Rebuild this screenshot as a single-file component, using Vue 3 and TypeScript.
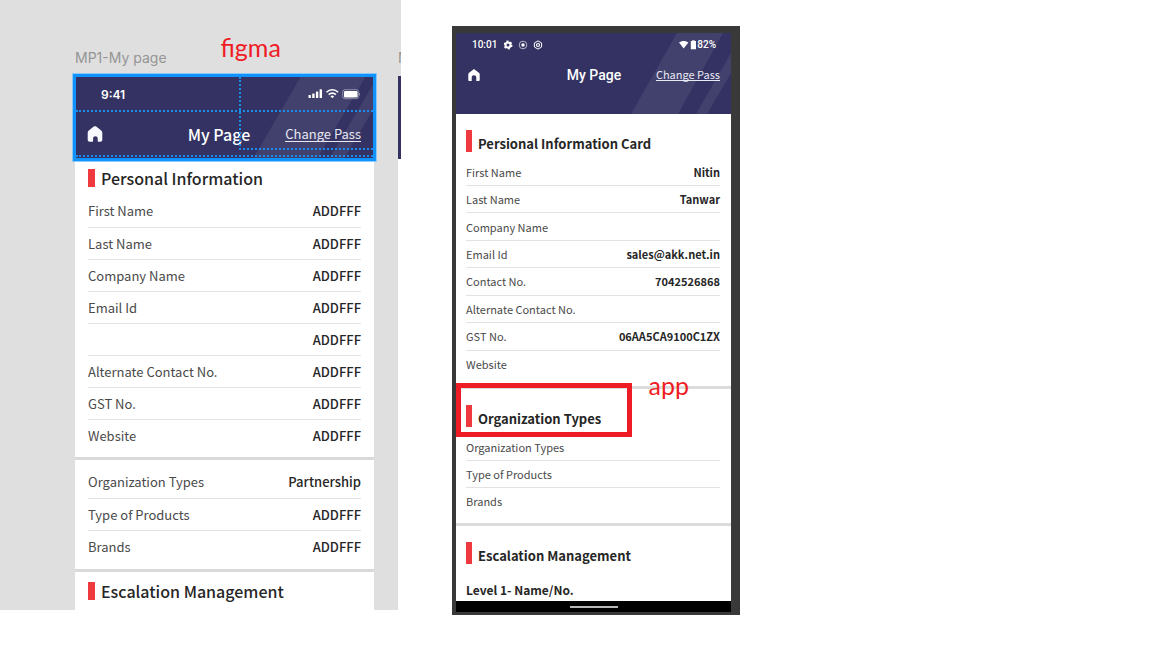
<script setup lang="ts">
interface Row {
  label: string
  value: string
}

const designPersonal: Row[] = [
  { label: 'First Name', value: 'ADDFFF' },
  { label: 'Last Name', value: 'ADDFFF' },
  { label: 'Company Name', value: 'ADDFFF' },
  { label: 'Email Id', value: 'ADDFFF' },
  { label: '', value: 'ADDFFF' },
  { label: 'Alternate Contact No.', value: 'ADDFFF' },
  { label: 'GST No.', value: 'ADDFFF' },
  { label: 'Website', value: 'ADDFFF' },
]

const designOrganization: Row[] = [
  { label: 'Organization Types', value: 'Partnership' },
  { label: 'Type of Products', value: 'ADDFFF' },
  { label: 'Brands', value: 'ADDFFF' },
]

const appPersonal: Row[] = [
  { label: 'First Name', value: 'Nitin' },
  { label: 'Last Name', value: 'Tanwar' },
  { label: 'Company Name', value: '' },
  { label: 'Email Id', value: 'sales@akk.net.in' },
  { label: 'Contact No.', value: '7042526868' },
  { label: 'Alternate Contact No.', value: '' },
  { label: 'GST No.', value: '06AA5CA9100C1ZX' },
  { label: 'Website', value: '' },
]

const appOrganization: Row[] = [
  { label: 'Organization Types', value: '' },
  { label: 'Type of Products', value: '' },
  { label: 'Brands', value: '' },
]
</script>

<template>
  <main class="board">
    <section class="canvas">
      <p class="frame-name">MP1-My page</p>
      <p class="frame-name next-name">M</p>
      <p class="note note-figma">figma</p>

      <article class="frame">
        <header class="head">
          <svg class="stripes" viewBox="0 0 299 83" preserveAspectRatio="none" aria-hidden="true">
            <polygon points="226,0 291,0 242,83 178,83" />
            <polygon points="299,7 299,32 269,83 254,83" />
          </svg>
          <div class="status">
            <span class="clock">9:41</span>
            <svg class="signals" width="52" height="12" viewBox="0 0 52 12" fill="#fff" aria-hidden="true">
              <rect x="0.5" y="7" width="2.4" height="3" rx="0.6" />
              <rect x="4.2" y="5.5" width="2.4" height="4.5" rx="0.6" />
              <rect x="7.9" y="3.5" width="2.4" height="6.5" rx="0.6" />
              <rect x="11.6" y="1.2" width="2.4" height="8.8" rx="0.6" />
              <g fill="none" stroke="#fff" stroke-width="1.6">
                <path d="M18.5 4.2c3.2-3.2 8.4-3.2 11.6 0" />
                <path d="M20.7 6.6c2-2 5.2-2 7.2 0" />
              </g>
              <path d="M22.4 8.3c1.1-1 2.7-1 3.8 0l-1.9 2z" />
              <rect x="34.7" y="1.7" width="16" height="9" rx="2.2" fill="none" stroke="#fff" stroke-opacity="0.4" />
              <rect x="36" y="3" width="13.6" height="6.4" rx="1.2" />
              <rect x="51.2" y="4.700" width="0.800" height="3" rx="0.4" opacity="0.5" />
            </svg>
          </div>
          <nav class="bar">
            <button class="home" type="button" aria-label="Home">
              <svg width="16" height="16" viewBox="0 0 16 16" fill="#f8f9ff" aria-hidden="true">
                <path d="M8 .2c.5 0 .8.1 1.2.4l5 4c.7.6 1.1 1.2 1.1 2.1v7.1c0 1.2-.8 2-2 2h-1.600c-.6 0-1-.4-1-1V12.500c0-1.400-.9-2.200-2.300-2.200s-2.300.8-2.300 2.200v2.300c0 .6-.4 1-1 1H2.700c-1.200 0-2-.8-2-2V6.700c0-.9.4-1.500 1.100-2.100l5-4C7.200.3 7.500.2 8 .2z" />
              </svg>
            </button>
            <h1 class="title">My Page</h1>
            <a class="change" href="#change-pass">Change Pass</a>
          </nav>
          <div class="selection" aria-hidden="true">
            <i class="guide guide-status"></i>
            <i class="guide guide-image"></i>
            <i class="guide guide-bottom"></i>
          </div>
        </header>

        <section class="group">
          <h2 class="heading">Personal Information</h2>
          <dl class="rows">
            <div v-for="(row, i) in designPersonal" :key="i" class="row">
              <dt>{{ row.label }}</dt>
              <dd>{{ row.value }}</dd>
            </div>
          </dl>
        </section>
        <section class="group group-plain">
          <dl class="rows">
            <div v-for="row in designOrganization" :key="row.label" class="row">
              <dt>{{ row.label }}</dt>
              <dd>{{ row.value }}</dd>
            </div>
          </dl>
        </section>
        <section class="group group-last">
          <h2 class="heading">Escalation Management</h2>
        </section>
      </article>

      <div class="next-frame"></div>
    </section>

    <section class="phone">
      <article class="screen">
        <header class="head">
          <svg class="stripes" viewBox="0 0 275 81" preserveAspectRatio="none" aria-hidden="true">
            <polygon points="221,0 267,0 222,81 175,81" />
            <polygon points="275,20 275,40 251,81 240,81" />
          </svg>
          <div class="status">
            <span class="clock">10:01</span>
            <svg class="apps" width="40" height="10" viewBox="0 0 40 10" fill="none" stroke="#fff" aria-hidden="true">
              <circle cx="4" cy="5" r="2.5" stroke-width="2" />
              <circle cx="4" cy="5" r="3.8" stroke-width="1.4" stroke-dasharray="2 1.98" />
              <circle cx="19" cy="5" r="3.8" stroke-width="0.8" stroke-opacity="0.8" />
              <circle cx="19" cy="5" r="1.7" fill="#fff" stroke="none" />
              <path d="M34 .9l3.6 2.05v4.1L34 9.1l-3.6-2.05v-4.1z" stroke-width="1" />
              <circle cx="34" cy="5" r="1.5" stroke-width="1.2" />
            </svg>
            <svg class="power" width="18" height="10" viewBox="0 0 18 10" fill="#fff" aria-hidden="true">
              <path d="M0 2.6C2.7.4 6.7.4 9.4 2.6L4.7 8.6z" />
              <path d="M13.2 1V.3h2.4V1h1.4v8.2h-5.2V1z" />
            </svg>
            <span class="level">82%</span>
          </div>
          <nav class="bar">
            <button class="home" type="button" aria-label="Home">
              <svg width="12" height="12" viewBox="0 0 12 12" fill="#fff" aria-hidden="true">
                <path d="M6 .1l4.9 3.6c.6.5.8.9.8 1.6V11c0 .6-.3.9-.9.9H8.3V8.5C8.3 7.1 7.4 6.3 6 6.3s-2.3.8-2.3 2.2v3.4H1.2c-.6 0-.9-.3-.9-.9V5.3c0-.7.2-1.1.8-1.6z" />
              </svg>
            </button>
            <h1 class="title">My Page</h1>
            <a class="change" href="#change-pass-app">Change Pass</a>
          </nav>
        </header>

        <section class="group">
          <h2 class="heading"><span>Persional Information Card</span></h2>
          <dl class="rows rows-long">
            <div v-for="row in appPersonal" :key="row.label" class="row">
              <dt>{{ row.label }}</dt>
              <dd>{{ row.value }}</dd>
            </div>
          </dl>
        </section>
        <section class="group">
          <h2 class="heading"><span>Organization Types</span></h2>
          <dl class="rows">
            <div v-for="row in appOrganization" :key="row.label" class="row">
              <dt>{{ row.label }}</dt>
              <dd>{{ row.value }}</dd>
            </div>
          </dl>
          <div class="marker" aria-hidden="true"></div>
          <p class="note note-app">app</p>
        </section>
        <section class="group group-last">
          <h2 class="heading"><span>Escalation Management</span></h2>
          <h3 class="level-title">Level 1- Name/No.</h3>
        </section>
        <footer class="gesture"><span></span></footer>
      </article>
    </section>
  </main>
</template>

<style>
body {
  background: #fff;
}
</style>

<style scoped>
* {
  box-sizing: border-box;
}

h1,
h2,
h3,
p,
dl,
dd {
  margin: 0;
}

.board {
  display: grid;
  grid-template-columns: minmax(0, 401fr) minmax(0, 51fr) minmax(0, 288fr) minmax(0, 412fr);
  align-items: start;
  font-family: 'Noto Sans CJK JP', 'Noto Sans', sans-serif;
}

/* Shared page parts */
.head {
  position: relative;
  background: #333262;
  color: #fff;
}

.stripes {
  position: absolute;
  inset: 0;
  width: 100%;
  height: 100%;
  fill: #42416d;
}

.status {
  position: relative;
  display: flex;
  align-items: center;
}

.bar {
  position: relative;
  display: grid;
  grid-template-columns: 1fr auto 1fr;
  align-items: center;
}

.home {
  display: flex;
  justify-self: start;
  padding: 0;
  border: 0;
  background: none;
}

.title {
  font-weight: 500;
}

.change {
  justify-self: end;
  color: #e8e8f2;
  text-decoration: none;
  border-bottom: 1px solid #e8e8f2;
}

.heading {
  display: flex;
  align-items: center;
  color: #262626;
}

.heading::before {
  content: '';
  background: #ee3a3f;
}

.rows {
  display: flex;
  flex-direction: column;
}

.row {
  flex: 1;
  display: flex;
  align-items: center;
  justify-content: space-between;
  color: #4a4a4a;
}

.row + .row {
  border-top: 1px solid #e2e2e2;
}

.row dd {
  color: #262626;
}

.note {
  font-family: Lato, sans-serif;
  font-size: 25px;
  line-height: 28px;
  color: #f01c24;
}

/* Design canvas */
.canvas {
  position: relative;
  display: grid;
  grid-template-columns: minmax(0, 75fr) minmax(0, 299fr) minmax(0, 24fr) minmax(0, 3fr);
  grid-template-rows: 76px auto;
  background: #dfdfdf;
  overflow: hidden;
}

.frame-name {
  grid-column: 2;
  grid-row: 1;
  align-self: end;
  padding-bottom: 8px;
  font-family: Inter, sans-serif;
  font-size: 14px;
  line-height: 20px;
  color: #959595;
}

.next-name {
  grid-column: 4;
}

.note-figma {
  position: absolute;
  top: 33px;
  left: 55%;
}

.frame {
  grid-column: 2;
  grid-row: 2;
  background: #fff;
}

.next-frame {
  grid-column: 4;
  grid-row: 2;
  background: linear-gradient(#333262 83px, #fff 83px);
}

.frame .status {
  justify-content: space-between;
  height: 36px;
  padding: 0 14px 0 26px;
}

.frame .clock {
  font-family: Inter, sans-serif;
  font-size: 12px;
  font-weight: 600;
}

.frame .bar {
  grid-template-columns: 10fr auto 11fr;
  height: 47px;
  padding: 0 13px 3px 12px;
}

.frame .title {
  font-size: 16px;
  line-height: 20px;
}

.frame .change {
  font-size: 13px;
  line-height: 15px;
}

.selection {
  position: absolute;
  inset: -2px -2px -2px;
  border: 3px solid #1093ff;
  outline: 1px solid #8cc8f8;
}

.guide {
  position: absolute;
  right: 0;
  border: 0 dotted #1a8cf0;
}

.guide-status {
  top: 33px;
  left: 0;
  border-top-width: 2px;
}

.guide-image {
  top: 0;
  left: 55%;
  height: 73px;
  border-left-width: 2px;
  border-bottom-width: 2px;
}

.guide-bottom {
  bottom: 1px;
  left: 0;
  border-top-width: 2px;
}

.frame .group {
  padding: 0 13px 6px;
  border-bottom: 3px solid #d9d9d9;
}

.frame .group-plain {
  padding-top: 6px;
  padding-bottom: 7px;
}

.frame .group-last {
  padding-bottom: 2px;
  border-bottom: 0;
}

.frame .heading {
  gap: 6px;
  height: 36px;
  padding-top: 2px;
  font-size: 16px;
  line-height: 24px;
  font-weight: 500;
}

.frame .heading::before {
  width: 7px;
  height: 18px;
}

.frame .row {
  min-height: 32px;
  font-size: 13px;
  line-height: 20px;
}

.frame .row dd {
  font-weight: 500;
}

/* Phone capture */
.phone {
  grid-column: 3;
  margin-top: 26px;
  padding: 7px 9px 3px 4px;
  background: #393939;
}

.screen {
  background: #fff;
}

.screen .head {
  padding-bottom: 23px;
}

.screen .status {
  height: 23px;
  padding: 0 15px 0 16px;
  font-family: Roboto, sans-serif;
  font-size: 10px;
  font-weight: 500;
}

.apps {
  margin-left: 7px;
}

.power {
  margin-left: auto;
}

.screen .bar {
  height: 35px;
  padding: 2px 11px 0 12px;
}

.screen .title {
  font-family: Roboto, sans-serif;
  font-size: 14px;
  line-height: 16px;
}

.screen .change {
  font-size: 11px;
  line-height: 12px;
}

.screen .group {
  position: relative;
  padding: 16px 11px 9px 10px;
  border-bottom: 3px solid #dcdcdc;
}

.screen .group-last {
  padding-bottom: 0;
  border-bottom: 0;
}

.screen .heading {
  gap: 6px;
  height: 28px;
  padding-bottom: 6px;
  font-size: 13px;
  line-height: 18px;
  font-weight: 700;
}

.screen .heading::before {
  width: 6px;
  height: 22px;
}

.screen .heading span {
  padding-top: 5px;
}

.screen .row {
  min-height: 27px;
  font-size: 11px;
  line-height: 16px;
}

.screen .rows-long {
  min-height: 219px;
}

.screen .row dd {
  font-weight: 700;
}

.level-title {
  padding: 9px 0 0;
  font-size: 12px;
  line-height: 22px;
  font-weight: 700;
  color: #262626;
}

.marker {
  position: absolute;
  top: -6px;
  left: 0;
  width: 64%;
  height: 54px;
  border: 5px solid #ee1c24;
}

.note-app {
  position: absolute;
  top: -18px;
  left: 70%;
}

.gesture {
  display: flex;
  align-items: center;
  justify-content: center;
  height: 11px;
  background: #000;
}

.gesture span {
  width: 48px;
  height: 2px;
  background: #b8b8b8;
}
</style>
